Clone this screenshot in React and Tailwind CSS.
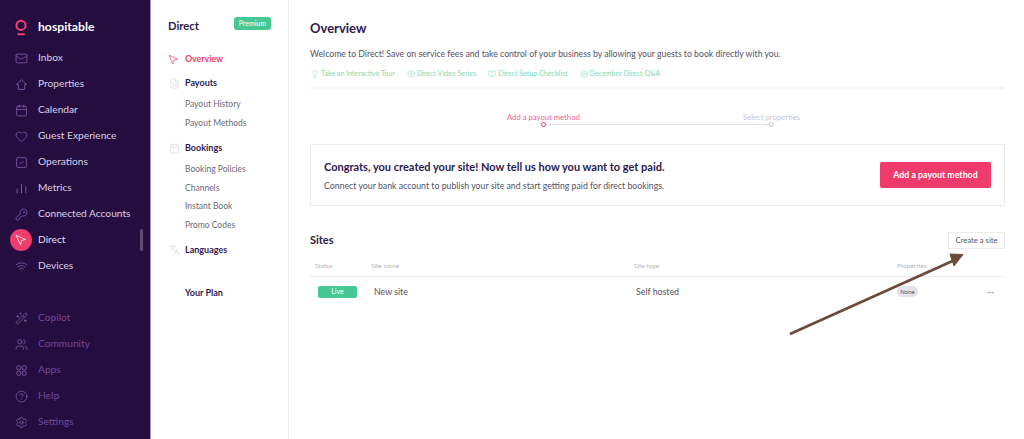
import {
  Mail, Calendar, Heart, SquareCheck, Wifi, KeyRound, Users, CircleHelp, Settings,
  Lightbulb, CirclePlay, BookOpen, Languages, FileText, WandSparkles,
} from "lucide-react";

function Pointer({ className }) {
  return (
    <svg viewBox="0 0 24 24" fill="none" stroke="currentColor" strokeWidth="1.5" strokeLinejoin="round" strokeLinecap="round" className={className}>
      <path d="M3 3l18 8-8 2-2 8z" />
    </svg>
  );
}

function House({ className }) {
  return (
    <svg viewBox="0 0 24 24" fill="none" stroke="currentColor" strokeWidth="1.7" strokeLinejoin="round" className={className}>
      <path d="M12 3L3 12h3v9h12v-9h3z" />
    </svg>
  );
}

function Bars({ className }) {
  return (
    <svg viewBox="0 0 24 24" fill="none" stroke="currentColor" strokeWidth="1.8" strokeLinecap="round" className={className}>
      <path d="M4 20v-7M12 20V4M20 20V9" />
    </svg>
  );
}

function Apps({ className }) {
  return (
    <svg viewBox="0 0 24 24" fill="none" stroke="currentColor" strokeWidth="1.8" className={className}>
      <circle cx="7" cy="7" r="4" />
      <circle cx="17" cy="7" r="4" />
      <circle cx="7" cy="17" r="4" />
      <circle cx="17" cy="17" r="4" />
    </svg>
  );
}

const topNav = [
  { label: "Inbox", icon: Mail },
  { label: "Properties", icon: House },
  { label: "Calendar", icon: Calendar },
  { label: "Guest Experience", icon: Heart },
  { label: "Operations", icon: SquareCheck },
  { label: "Metrics", icon: Bars },
  { label: "Connected Accounts", icon: KeyRound },
];

const bottomNav = [
  { label: "Copilot", icon: WandSparkles },
  { label: "Community", icon: Users },
  { label: "Apps", icon: Apps },
  { label: "Help", icon: CircleHelp },
  { label: "Settings", icon: Settings },
];

const links = [
  { label: "Take an Interactive Tour", icon: Lightbulb },
  { label: "Direct Video Series", icon: CirclePlay },
  { label: "Direct Setup Checklist", icon: BookOpen },
  { label: "December Direct Q&A", icon: CirclePlay },
];

function NavRow({ item, dim }) {
  const Icon = item.icon;
  return (
    <div className={`flex h-[26px] items-center ${dim ? "text-[#6f4a9c]" : "text-[#d9cfe6]"}`}>
      <div className="flex w-[38px] justify-center pl-[5px]">
        <Icon className={`h-[13px] w-[13px] ${dim ? "text-[#7a559f]" : "text-[#7d56a8]"}`} strokeWidth={1.6} />
      </div>
      <span className="whitespace-nowrap text-[10.2px]">{item.label}</span>
    </div>
  );
}

function SubLink({ children }) {
  return <div className="flex h-[18.6px] items-center pl-[34px] text-[8.500px] text-[#6d6a76]">{children}</div>;
}

function SubHead({ icon: Icon, children, className = "" }) {
  return (
    <div className={`flex h-[18px] items-center text-[9px] font-bold text-[#2d1a4f] ${className}`}>
      <div className="flex w-[17px] pl-[1px]">
        {Icon && <Icon className="h-[11px] w-[11px] text-[#d8d8dc]" strokeWidth={1.5} />}
      </div>
      {children}
    </div>
  );
}

export default function App() {
  return (
    <div className="relative flex h-[439px] w-[1024px] overflow-hidden bg-white font-['Lato',sans-serif]">
      {/* main nav */}
      <aside className="relative flex w-[150px] shrink-0 flex-col bg-[#250d3f] pt-[17px]">
        <div className="flex h-[20px] items-center pl-[15px]">
          <svg viewBox="0 0 14 20" className="h-[17px] w-[12px] text-[#ef3e6d]" fill="none" stroke="currentColor" strokeWidth="2.4" strokeLinecap="round">
            <circle cx="7" cy="7.5" r="5.4" />
            <path d="M3.5 18h7" />
          </svg>
          <span className="ml-[11px] text-[12.2px] font-bold text-white">hospitable</span>
        </div>
        <div className="mt-[8px]">
          {topNav.map((item) => (
            <NavRow key={item.label} item={item} />
          ))}
          <div className="flex h-[26px] items-center text-[#e4dcec]">
            <div className="ml-[10px] mr-[6px] flex h-[22px] w-[22px] items-center justify-center rounded-full bg-[#ef3e6d]">
              <Pointer className="h-[12px] w-[12px] text-white" />
            </div>
            <span className="text-[10.2px]">Direct</span>
          </div>
          <NavRow item={{ label: "Devices", icon: Wifi }} />
        </div>
        <div className="mt-[26px]">
          {bottomNav.map((item) => (
            <NavRow key={item.label} item={item} dim />
          ))}
        </div>
        <div className="absolute left-[140px] top-[229px] h-[22px] w-[3px] rounded-full bg-[#5d4a73]" />
      </aside>

      {/* section nav */}
      <nav className="w-[139px] shrink-0 border-x border-x-[#a897bb] border-r-[#ececf0] pl-[17px] pr-[17px] pt-[17px]">
        <div className="flex h-[20px] items-start justify-between">
          <span className="mt-[1px] text-[11.200px] font-bold text-[#2d1a4f]">Direct</span>
          <span className="rounded-[3px] bg-[#45c893] px-[5px] py-[1px] text-[7px] text-white">Premium</span>
        </div>
        <div className="mt-[13px] flex h-[18px] items-center text-[8.800px] font-bold text-[#ef3e6d]">
          <div className="w-[17px]">
            <Pointer className="h-[11px] w-[11px]" />
          </div>
          Overview
        </div>
        <SubHead icon={FileText} className="mt-[6px]">Payouts</SubHead>
        <div className="-ml-[17px] mt-[3px]">
          <SubLink>Payout History</SubLink>
          <SubLink>Payout Methods</SubLink>
        </div>
        <SubHead icon={Calendar} className="mt-[7px]">Bookings</SubHead>
        <div className="-ml-[17px] mt-[3px]">
          <SubLink>Booking Policies</SubLink>
          <SubLink>Channels</SubLink>
          <SubLink>Instant Book</SubLink>
          <SubLink>Promo Codes</SubLink>
        </div>
        <SubHead icon={Languages} className="mt-[6px]">Languages</SubHead>
        <SubHead className="mt-[25px]">Your Plan</SubHead>
      </nav>

      {/* content */}
      <main className="min-w-0 flex-1 pl-[21px] pr-[19px] pt-[18px]">
        <h1 className="text-[13px] font-bold leading-[20px] text-[#2d1a4f]">Overview</h1>
        <p className="mt-[9px] whitespace-nowrap text-[8.700px] leading-[14px] text-[#55525f]">
          Welcome to Direct! Save on service fees and take control of your business by allowing your guests to book directly with you.
        </p>
        <div className="mt-[6px] flex h-[14px] items-center gap-[12px] pl-[1px] text-[7.100px] text-[#7fd9b3]">
          {links.map(({ label, icon: Icon }) => (
            <span key={label} className="flex items-center gap-[2px] whitespace-nowrap">
              <Icon className="h-[8px] w-[8px]" strokeWidth={1.5} />
              {label}
            </span>
          ))}
        </div>
        <div className="mt-[6px] h-[2px] bg-[#f5f5f7]" />

        <div className="relative mt-[22px] h-[14px]">
          <div className="absolute left-[197px] top-0 text-[7.700px] leading-[12px] text-[#f0648c]">Add a payout method</div>
          <div className="absolute left-[433px] top-0 text-[7.700px] leading-[12px] text-[#c8c6d0]">Select properties</div>
          <div className="absolute left-[234px] top-[13px] h-px w-[227px] bg-[#dedbe8]" />
          <div className="absolute left-[231px] top-[11px] h-[5px] w-[5px] rounded-full border border-[#ef3e6d] bg-white" />
          <div className="absolute left-[459px] top-[11px] h-[5px] w-[5px] rounded-full border border-[#c9c7d2] bg-white" />
        </div>

        <section className="mt-[19px] flex h-[62px] items-center justify-between border border-[#ececf0] pl-[13px] pr-[13px]">
          <div>
            <h2 className="whitespace-nowrap text-[11px] font-bold leading-[16px] text-[#2d1a4f]">
              Congrats, you created your site! Now tell us how you want to get paid.
            </h2>
            <p className="mt-[5px] whitespace-nowrap text-[8.750px] leading-[12px] text-[#55525f]">
              Connect your bank account to publish your site and start getting paid for direct bookings.
            </p>
          </div>
          <button className="flex h-[26px] w-[111px] items-center justify-center rounded-[2px] bg-[#ef3a6c] text-[8.800px] font-bold text-white">
            Add a payout method
          </button>
        </section>

        <div className="mt-[26px] flex h-[17px] items-center justify-between">
          <h2 className="text-[11px] font-bold text-[#2d1a4f]">Sites</h2>
          <button className="flex h-[17px] w-[57px] items-center justify-center border border-[#ececf0] text-[7.700px] text-[#55525f]">
            Create a site
          </button>
        </div>

        <div className="mt-[6px] grid h-[22px] grid-cols-[56px_263px_263px_1fr] items-center border-b border-[#ececf0] pl-[5px] text-[6.500px] text-[#b5b3bd]">
          <span>Status</span>
          <span>Site name</span>
          <span>Site type</span>
          <span>Properties</span>
        </div>
        <div className="grid h-[29px] grid-cols-[56px_262px_261px_90px_1fr] items-center pl-[8px] text-[8.800px] text-[#55525f]">
          <span className="flex h-[12px] w-[39px] items-center justify-center rounded-[2px] bg-[#45c893] text-[7px] text-white">Live</span>
          <span>New site</span>
          <span>Self hosted</span>
          <span className="flex h-[11px] w-[21px] items-center justify-center rounded-full bg-[#e4e2ea] text-[6px] text-[#55525f]">None</span>
          <span className="text-[9px] leading-none text-[#8b8994]">···</span>
        </div>
      </main>

      {/* annotation arrow */}
      <svg className="absolute left-0 top-0 h-[439px] w-[1024px]" viewBox="0 0 1024 439" fill="none">
        <path d="M790 334L957 259" stroke="#6b4a3a" strokeWidth="2.600" />
        <path d="M950 254L963 254.500L954 266Z" fill="#6b4a3a" stroke="#6b4a3a" strokeWidth="1" />
      </svg>
    </div>
  );
}
